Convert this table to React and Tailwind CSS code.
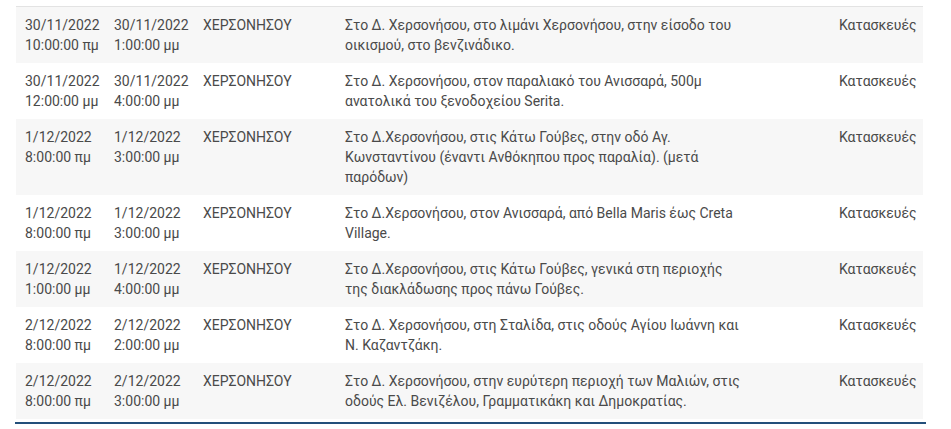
import React from "react";

const rows = [
  ["30/11/2022", "10:00:00 πμ", "30/11/2022", "1:00:00 μμ", "Στο Δ. Χερσονήσου, στο λιμάνι Χερσονήσου, στην είσοδο του οικισμού, στο βενζινάδικο."],
  ["30/11/2022", "12:00:00 μμ", "30/11/2022", "4:00:00 μμ", "Στο Δ. Χερσονήσου, στον παραλιακό του Ανισσαρά, 500μ ανατολικά του ξενοδοχείου Serita."],
  ["1/12/2022", "8:00:00 πμ", "1/12/2022", "3:00:00 μμ", "Στο Δ.Χερσονήσου, στις Κάτω Γούβες, στην οδό Αγ. Κωνσταντίνου (έναντι Ανθόκηπου προς παραλία). (μετά παρόδων)"],
  ["1/12/2022", "8:00:00 πμ", "1/12/2022", "3:00:00 μμ", "Στο Δ.Χερσονήσου, στον Ανισσαρά, από Bella Maris έως Creta Village."],
  ["1/12/2022", "1:00:00 μμ", "1/12/2022", "4:00:00 μμ", "Στο Δ.Χερσονήσου, στις Κάτω Γούβες, γενικά στη περιοχής της διακλάδωσης προς πάνω Γούβες."],
  ["2/12/2022", "8:00:00 πμ", "2/12/2022", "2:00:00 μμ", "Στο Δ. Χερσονήσου, στη Σταλίδα, στις οδούς Αγίου Ιωάννη και Ν. Καζαντζάκη."],
  ["2/12/2022", "8:00:00 πμ", "2/12/2022", "3:00:00 μμ", "Στο Δ. Χερσονήσου, στην ευρύτερη περιοχή των Μαλιών, στις οδούς Ελ. Βενιζέλου, Γραμματικάκη και Δημοκρατίας."],
];

export default function App() {
  return (
    <div className="w-[951px] h-[429px] bg-white pt-[6px] font-['Roboto',sans-serif] text-[14px] leading-5 text-[#4a4a4a]">
      <div className="ml-[15px] w-[911px] border-b-2 border-[#234f7a] pb-[3px]">
        <div className="ml-px w-[907px] border-t border-[#e3e3e3]">
          {rows.map((r, i) => (
            <div
              key={i}
              className={`flex py-2 ${i % 2 === 0 ? "bg-[#f7f7f7]" : "bg-white"}`}
            >
              <div className="w-[89px] shrink-0 pl-[9px]">
                <div>{r[0]}</div>
                <div>{r[1]}</div>
              </div>
              <div className="w-[89px] shrink-0 pl-[9px]">
                <div>{r[2]}</div>
                <div>{r[3]}</div>
              </div>
              <div className="w-[142px] shrink-0 pl-[9px]">ΧΕΡΣΟΝΗΣΟΥ</div>
              <div className="w-[494px] shrink-0 pl-[9px]">
                <div className="w-[396px]">{r[4]}</div>
              </div>
              <div className="w-[93px] shrink-0 pl-[9px]">Κατασκευές</div>
            </div>
          ))}
        </div>
      </div>
    </div>
  );
}
